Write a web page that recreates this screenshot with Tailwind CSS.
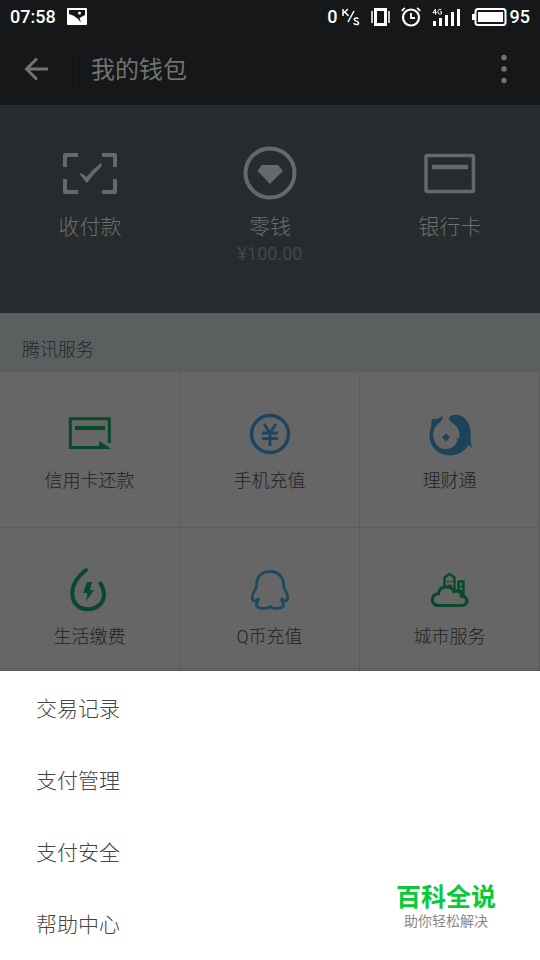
<!DOCTYPE html>
<html lang="zh-CN">
<head>
<meta charset="utf-8">
<meta name="viewport" content="width=device-width, initial-scale=1">
<title>我的钱包</title>
<script src="https://cdn.jsdelivr.net/npm/@tailwindcss/browser@4"></script>
</head>
<body class="bg-white">
<div class="relative flex min-h-screen flex-col font-[Roboto,'Noto_Sans_CJK_SC',sans-serif]">
  <div class="bg-[#151718]">
    <div class="flex h-[33px] items-center justify-between px-[10px] text-[18px] leading-[18px] font-medium text-white">
      <div class="flex items-center gap-[11px]">
        <span>07:58</span>
        <svg class="h-[17px] w-[20px]" viewBox="0 0 20 17"><path fill="#fff" fill-rule="evenodd" d="M1 0H19Q20 0 20 1V16Q20 17 19 17H1Q0 17 0 16V1Q0 0 1 0ZM2 2V6Q7 7 10.500 10.500L14 14.500L12.500 10L18 7V2ZM12.500 3.500A1.500 1.500 0 1 1 12.500 6.500A1.500 1.500 0 1 1 12.500 3.500Z"/></svg>
      </div>
      <div class="flex items-center">
        <span>0</span>
        <svg class="ml-[3px] h-[18px] w-[19px]" viewBox="0 0 19 18"><g fill="none" stroke="#fff" stroke-width="1.500"><path d="M2 1V8M7 1L2.500 5M4 4L7.500 8M13 3L7 14"/><path d="M17.300 11C16.500 9.600 13.200 9.800 13.200 11.600C13.200 13.500 17.600 12.800 17.600 14.900C17.600 16.900 13.600 17 12.700 15.200"/></g></svg>
        <svg class="ml-[11px] h-[20px] w-[19px]" viewBox="0 0 19 20"><rect x="4.500" y="2.500" width="10" height="15" fill="none" stroke="#fff" stroke-width="3"/><path d="M1 4V16M18 4V16" stroke="#fff" stroke-width="1.500"/></svg>
        <svg class="ml-[11px] h-[20px] w-[20px]" viewBox="0 0 20 20"><circle cx="10" cy="10.500" r="8" fill="none" stroke="#fff" stroke-width="2.200"/><path d="M10 6V11H14M1 4Q2 2 4 1M19 4Q18 2 16 1" fill="none" stroke="#fff" stroke-width="1.800"/></svg>
        <svg class="ml-[11px] h-[20px] w-[29px]" viewBox="0 0 29 20"><path d="M2.500 14V19M8.500 11V19M14.500 8V19M20.500 5V19M26.500 2V19" stroke="#fff" stroke-width="3"/><path d="M3.500 7.500V2L1 5.700H5M9.300 2.700C7.500 1.500 6 2.700 6 4.700C6 7.300 8 7.600 9.500 6.700V4.800H8" fill="none" stroke="#fff"/></svg>
        <svg class="ml-[11px] h-[18px] w-[35px]" viewBox="0 0 35 18"><rect x="3.500" y="1" width="30" height="16" rx="2.500" fill="none" stroke="#fff" stroke-width="2"/><path d="M6 4H31V14H6ZM0 6H3V12H0Z" fill="#fff"/></svg>
        <span class="ml-[3px]">95</span>
      </div>
    </div>
    <header class="flex h-[72px] items-center">
      <button class="flex h-[38px] w-[73px] items-center border-r border-[#101213] pl-[24px]" aria-label="返回">
        <svg class="h-[24px] w-[25px]" viewBox="0 0 25 24"><path d="M24 12H2M13 1.500L2.500 12L13 22.500" fill="none" stroke="#717373" stroke-width="3"/></svg>
      </button>
      <h1 class="ml-[18px] flex-1 pt-[2px] text-[24px] leading-[36px] text-[#717373]">我的钱包</h1>
      <button class="flex h-[48px] w-[72px] items-center justify-center" aria-label="更多">
        <svg class="h-[30px] w-[6px]" viewBox="0 0 6 30"><g fill="#717373"><circle cx="3" cy="3.500" r="2.700"/><circle cx="3" cy="15" r="2.700"/><circle cx="3" cy="26.500" r="2.700"/></g></svg>
      </button>
    </header>
  </div>

  <main>
    <section class="grid grid-cols-3 bg-[#262b2e] pt-[40px] pb-[47px] text-center font-light text-[#6b6e6f]">
      <a href="#pay" class="flex flex-col items-center">
        <svg class="h-[56px] w-[56px]" viewBox="62 145 56 56"><path d="M78 155H65V167M102 155H115V167M78 192H65V179M102 192H115V179" fill="none" stroke="#666969" stroke-width="4" stroke-linejoin="round"/><path d="M79.500 174Q81 171.500 86.500 177Q93 169 101 163Q102.500 164 101 167Q93 174 87.500 182.500Q86 183 85 181Q82 177 79.500 174Z" fill="#666969"/></svg>
        <span class="mt-[11px] text-[21px] leading-[30px]">收付款</span>
      </a>
      <a href="#balance" class="flex flex-col items-center">
        <svg class="h-[56px] w-[56px]" viewBox="242 145 56 56"><circle cx="270" cy="173" r="24.500" fill="none" stroke="#666969" stroke-width="4"/><path d="M262 165H278L283 171L270 184L257.500 171Z" fill="#666969"/></svg>
        <span class="mt-[11px] text-[21px] leading-[30px]">零钱</span>
        <span class="text-[18px] leading-[24px] font-normal text-[#434749]">¥100.00</span>
      </a>
      <a href="#cards" class="flex flex-col items-center">
        <svg class="h-[56px] w-[56px]" viewBox="422 145 56 56"><rect x="426" y="155.500" width="47.500" height="36" rx="1.500" fill="none" stroke="#666969" stroke-width="3.500"/><path d="M432 167H468" stroke="#666969" stroke-width="4.500"/></svg>
        <span class="mt-[11px] text-[21px] leading-[30px]">银行卡</span>
      </a>
    </section>

    <h2 class="bg-[#5c5f60] px-[22px] pt-[22px] pb-[7px] text-[18px] leading-[30px] font-light text-[#242627]">腾讯服务</h2>

    <section class="grid grid-cols-3 bg-[#666666] text-center text-[18px] leading-[28px] font-light text-[#222222]">
      <a href="#credit" class="flex h-[156px] flex-col items-center border-r border-b border-[#5d5d5d] pt-[37px]">
        <svg class="h-[50px] w-[50px]" viewBox="65 409 50 50"><path d="M109.300 443V418.700H70.300V447.500H103" fill="none" stroke="#06492b" stroke-width="3"/><path d="M75 428H105" stroke="#06492b" stroke-width="4"/><path d="M99.500 441L111 449H98.500Z" fill="#06492b"/></svg>
        <span class="mt-[8px]">信用卡还款</span>
      </a>
      <a href="#phone" class="flex h-[156px] flex-col items-center border-r border-b border-[#5d5d5d] pt-[37px]">
        <svg class="h-[50px] w-[50px]" viewBox="245 409 50 50"><g fill="none" stroke="#1d4460"><circle cx="270" cy="434" r="18.500" stroke-width="3.400"/><path d="M264 424L270 433L276 424M262 433H278M262 438.500H278M270 433V446" stroke-width="2.800"/></g></svg>
        <span class="mt-[8px]">手机充值</span>
      </a>
      <a href="#fund" class="flex h-[156px] flex-col items-center border-r border-b border-[#5d5d5d] pt-[37px]">
        <svg class="h-[50px] w-[50px]" viewBox="425 409 50 50"><g fill="#1b4459"><path d="M449 417.500C450 415.500 454 414.500 458 415C465 416 469.500 423 470.500 430C471 436 470 440 472 448L468.500 445C464 453 455 456.500 446 455C436 453.500 429.500 445 429.500 435C429.500 430 432 426 431.500 420C433 418 436 420 438 418.500L443 416C442 420 441 422 438 424C434 427 432.500 433 433.500 438C435.500 446 441 450 447 449C453 448.500 457 444 457.500 440L456 438L459 439C460.500 434 459 429 455 425C452 422.500 449 421 449 417.500Z"/><path d="M446 433.500L450 437.500L446 441.500L442 437.500Z"/></g></svg>
        <span class="mt-[8px]">理财通</span>
      </a>
      <a href="#utilities" class="flex h-[143px] flex-col items-center border-r border-[#5d5d5d] pt-[37px]">
        <svg class="h-[50px] w-[50px]" viewBox="65 565 50 50"><path d="M86 570C77 577 72.300 585 72.300 593.500C72.300 603 79 609.300 88 609.300C97 609.300 104 603 104 594.500C104 590 102.800 587 100.500 583.500" fill="none" stroke="#06492b" stroke-width="4" stroke-linecap="round"/><path d="M87 582H92L90 590H94L86 601L87.500 593H83Z" fill="#06492b"/></svg>
        <span class="mt-[8px]">生活缴费</span>
      </a>
      <a href="#qcoin" class="flex h-[143px] flex-col items-center border-r border-[#5d5d5d] pt-[37px]">
        <svg class="h-[50px] w-[50px]" viewBox="245 565 50 50"><path d="M270 571.500C261 571.500 256.500 577.500 256.500 585Q256.500 588 255 590C251.500 595 251.500 600 254 601Q256 601 258 599Q258.500 601 257 603C255 607 259 608.500 264 608.500Q268 608.500 270 606.500Q272 608.500 276 608.500C281 608.500 285 607 283 603Q281.500 601 282 599Q284 601 286 601C288.500 600 288.500 595 285 590Q283.500 588 283.500 585C283.500 577.500 279 571.500 270 571.500Z" fill="none" stroke="#1d4a62" stroke-width="2.800" stroke-linejoin="round"/></svg>
        <span class="mt-[8px]">Q币充值</span>
      </a>
      <a href="#city" class="flex h-[143px] flex-col items-center border-r border-[#5d5d5d] pt-[37px]">
        <svg class="h-[50px] w-[50px]" viewBox="425 565 50 50"><g fill="none" stroke="#06492b"><path d="M438.500 605.500C430.500 605.500 430 594.500 438.500 593.500C439 585.500 451 584.500 454 591.500C459 590 461.500 592 461.500 596C469 597 468.500 605.500 461.500 605.500Z" stroke-width="3.200"/><path d="M444.500 588V577.500L449.500 574L454.500 577.500V590M458.500 592V581.500H463.500V595.500" stroke-width="2.400" stroke-linejoin="round"/><path d="M447 581.500H449M450.500 581.500H452.500M448 585.500H452M459.500 586.500H463M459.500 590.500H463" stroke-width="1.500"/></g></svg>
        <span class="mt-[8px]">城市服务</span>
      </a>
    </section>
  </main>

  <nav aria-label="钱包菜单" class="relative flex-1 bg-white pt-px shadow-[0_-2px_3px_rgba(0,0,0,0.12)]">
    <ul class="text-[21px] leading-[30px] font-light text-[#444444]">
      <li><button class="block w-full px-[36px] pt-[22px] pb-[20px] text-left">交易记录</button></li>
      <li><button class="block w-full px-[36px] pt-[22px] pb-[20px] text-left">支付管理</button></li>
      <li><button class="block w-full px-[36px] pt-[22px] pb-[20px] text-left">支付安全</button></li>
      <li><button class="block w-full px-[36px] pt-[22px] pb-[20px] text-left">帮助中心</button></li>
    </ul>
  </nav>

  <div class="absolute right-[44px] bottom-[32px] text-center">
    <p class="text-[25px] leading-[32px] font-bold text-[#06cb35]">百科全说</p>
    <p class="text-[14px] leading-[14px] text-[#888888]">助你轻松解决</p>
  </div>
</div>
</body>
</html>
